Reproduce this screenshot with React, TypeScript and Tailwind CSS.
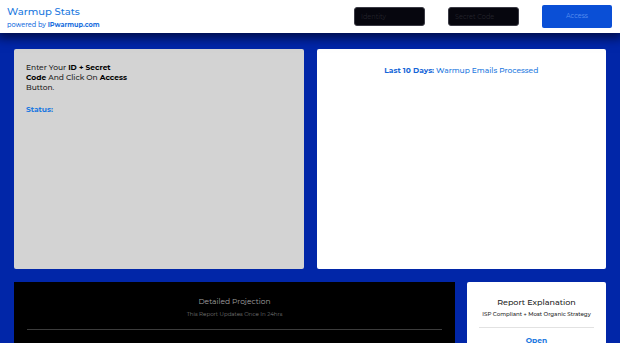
import React from 'react';

const font = "font-['Montserrat','Noto_Sans','Liberation_Sans',sans-serif]";

function Header() {
  return (
    <header className="relative z-10 flex h-[33px] items-center justify-between bg-white pl-[7px] pr-[8px] shadow-[0_2px_10px_3px_#000d4a]">
      <div className="pt-[2px] leading-none">
        <div className="text-[10px] font-medium text-[#1a78e0]">Warmup Stats</div>
        <div className="mt-[5px] text-[6.5px] font-medium text-[#1a6fe0]">
          powered by <b>IPwarmup.com</b>
        </div>
      </div>

      <div className="flex items-center">
        <input
          placeholder="Identity"
          className="h-[19px] w-[71px] rounded-[3px] border border-[#3a3a44] bg-[#06060e] px-[6px] text-[6.5px] text-white placeholder:text-[#24242c] outline-none"
        />
        <input
          placeholder="Secret Code"
          className="ml-[23px] h-[19px] w-[71px] rounded-[3px] border border-[#3a3a44] bg-[#06060e] px-[6px] text-[6.5px] text-white placeholder:text-[#24242c] outline-none"
        />
        <button className="ml-[23px] h-[23px] w-[70px] rounded-[2px] bg-[#0a4fd6] text-[6.5px] text-[#5b8ff0]">
          Access
        </button>
      </div>
    </header>
  );
}

export default function App() {
  return (
    <div className={`${font} h-[343px] w-[620px] overflow-hidden bg-[#0126a8]`}>
      <Header />

      <main className="px-[14px] pt-[16px]">
        {/* Top row */}
        <div className="grid grid-cols-2 gap-[13px]">
          <section className="h-[220px] rounded-[2px] bg-[#d3d3d3] px-[12px] pt-[14px]">
            <p className="text-[7.5px] font-medium leading-[10px] text-[#222]">
              Enter Your <b className="text-black">ID + Secret</b>
              <br />
              <b className="text-black">Code</b> And Click On <b className="text-black">Access</b>
              <br />
              Button.
            </p>
            <p className="mt-[12px] text-[7.5px] font-bold leading-[10px] text-[#1a78e0]">Status:</p>
          </section>

          <section className="h-[220px] rounded-[2px] bg-white pt-[17px] text-center">
            <p className="text-[7.5px] font-medium leading-[10px] text-[#1a78e0]">
              <b className="text-[#1466d8]">Last 10 Days:</b> Warmup Emails Processed
            </p>
          </section>
        </div>

        {/* Bottom row */}
        <div className="mt-[13px] grid grid-cols-[441px_1fr] gap-[12px]">
          <section className="h-[80px] bg-black px-[13px] pt-[15px] text-center">
            <p className="text-[7.5px] leading-[10px] text-[#a0a0a0]">Detailed Projection</p>
            <p className="mt-[3px] text-[5.5px] leading-[8px] text-[#767676]">This Report Updates Once In 24hrs</p>
            <div className="mt-[11px] h-px bg-[#3c3c3c]" />
          </section>

          <section className="h-[80px] rounded-[2px] bg-white px-[12px] pt-[15px] text-center">
            <p className="text-[8px] font-medium leading-[10px] text-[#222]">Report Explanation</p>
            <p className="mt-[3px] whitespace-nowrap text-[5.5px] font-medium leading-[8px] text-[#222]">
              ISP Compliant + Most Organic Strategy
            </p>
            <div className="mt-[9px] h-px bg-[#e2e2e2]" />
            <p className="mt-[8px] text-[7.5px] font-bold leading-[10px] text-[#1a78e0]">Open</p>
          </section>
        </div>
      </main>
    </div>
  );
}
